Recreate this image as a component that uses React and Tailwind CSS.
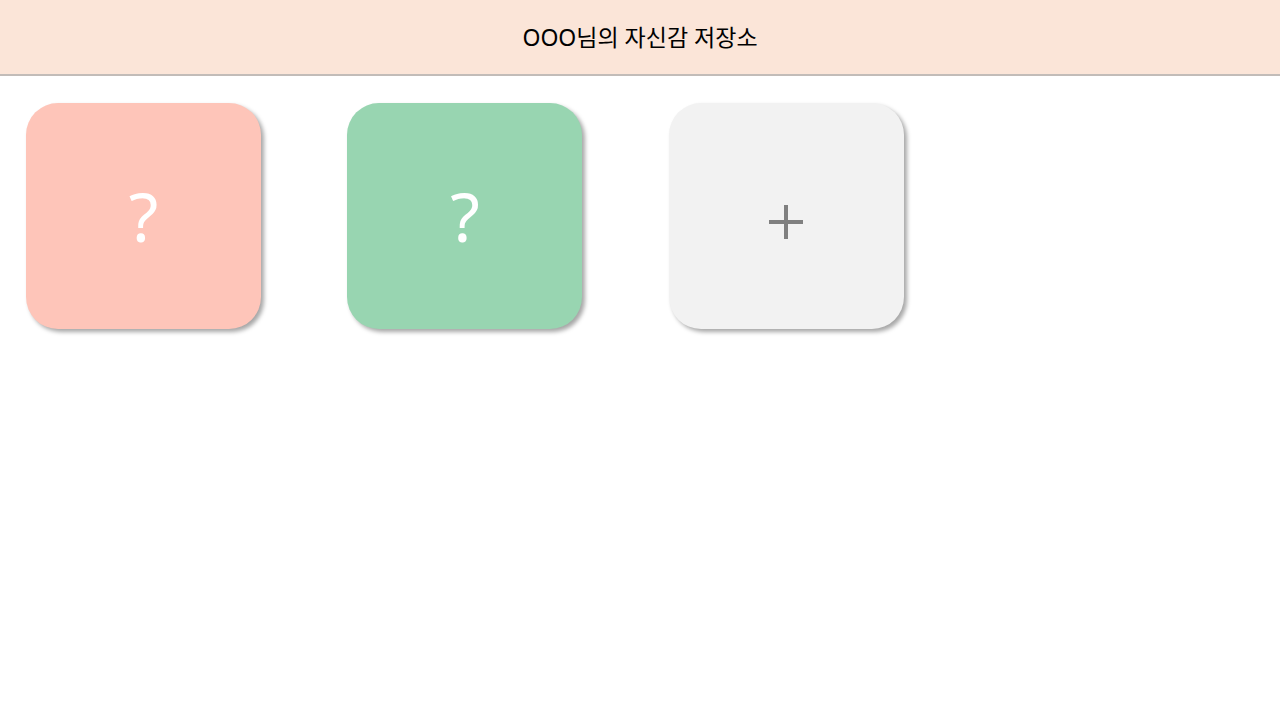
const cards = [
  { id: 1, color: "bg-[#fec5b9]" },
  { id: 2, color: "bg-[#98d5b1]" },
];

const App = () => {
  return (
    <div className="min-h-screen bg-white font-['Noto_Sans','Noto_Sans_CJK_KR',sans-serif]">
      <header className="h-[76px] bg-[#fbe5d8] border-b-2 border-[#c2bcb8] flex items-center justify-center">
        <h1 className="text-[23px] text-black mt-[1px]">OOO님의 자신감 저장소</h1>
      </header>

      <div className="flex gap-[86.4px] pl-[26px] pt-[27px]">
        {cards.map((card) => (
          <div
            key={card.id}
            className={`w-[235px] h-[226px] rounded-[32px] ${card.color} shadow-[3px_3px_4px_rgba(0,0,0,0.35)] flex items-center justify-center`}
          >
            <span className="text-[68px] leading-none text-white font-['Noto_Sans',sans-serif]">
              ?
            </span>
          </div>
        ))}
        <div className="w-[235px] h-[226px] rounded-[32px] bg-[#f2f2f2] shadow-[3px_3px_4px_rgba(0,0,0,0.35)] flex items-center justify-center">
          <svg width="34" height="34" viewBox="0 0 34 34" className="mt-[12px]">
            <rect x="15" y="0" width="4" height="34" fill="#808080" />
            <rect x="0" y="15" width="34" height="4" fill="#808080" />
          </svg>
        </div>
      </div>
    </div>
  );
};

export default App;
